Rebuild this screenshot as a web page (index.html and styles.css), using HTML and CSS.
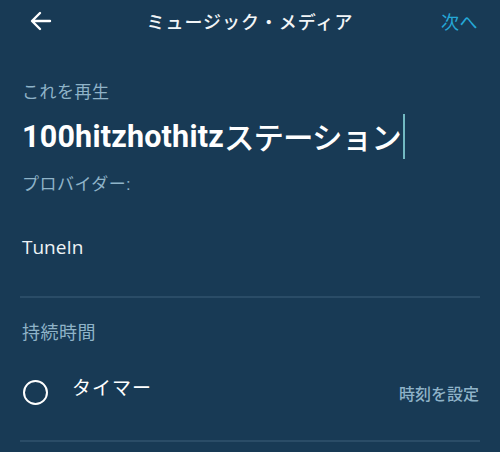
FILE: index.html
```html
<!DOCTYPE html>
<html lang="ja">
<head>
<meta charset="utf-8">
<link rel="stylesheet" href="styles.css">
</head>
<body>
<div class="screen">
  <header class="topbar">
    <svg class="back" width="22" height="20" viewBox="0 0 22 20"><path d="M20 10H3M10 2L2 10l8 8" fill="none" stroke="#fff" stroke-width="2.4" stroke-linecap="round" stroke-linejoin="round"/></svg>
    <div class="title">ミュージック・メディア</div>
    <div class="next">次へ</div>
  </header>
  <section class="block">
    <div class="label">これを再生</div>
    <div class="field"><span class="lat">100hitzhothitz</span><span class="jp">ステーション</span><span class="caret"></span></div>
    <div class="label provider">プロバイダー:</div>
    <div class="value">TuneIn</div>
  </section>
  <div class="divider"></div>
  <section class="block">
    <div class="label dur">持続時間</div>
    <div class="row">
      <span class="radio"></span>
      <span class="rowtext">タイマー</span>
      <span class="action">時刻を設定</span>
    </div>
  </section>
  <div class="divider last"></div>
</div>
</body>
</html>
```
FILE: styles.css
```css
html, body {
  margin: 0;
  padding: 0;
  background: #183a55;
}
.screen {
  width: 500px;
  height: 452px;
  overflow: hidden;
  background: #183a55;
  font-family: Roboto, "Noto Sans CJK JP", sans-serif;
  color: #fff;
}
.topbar {
  height: 42px;
  display: flex;
  align-items: center;
  padding: 0 22px 0 30px;
  position: relative;
}
.back { display: block; }
.title {
  position: absolute;
  left: 0;
  right: 0;
  text-align: center;
  font-size: 18px;
  font-weight: 500;
  letter-spacing: 1px;
  color: #f2f5f7;
  pointer-events: none;
}
.next {
  margin-left: auto;
  font-size: 18px;
  letter-spacing: 0.5px;
  color: #25a8d8;
}
.block {
  padding: 0 20px 0 22px;
}
.label {
  font-size: 17px;
  color: #8fb3c8;
  letter-spacing: 0.5px;
  line-height: 24px;
}
.block:first-of-type .label:first-child {
  margin-top: 38px;
}
.field {
  margin-top: 9px;
  height: 46px;
  display: flex;
  align-items: center;
  font-size: 30.5px;
}
.lat {
  font-weight: 700;
  letter-spacing: 0.2px;
}
.jp {
  font-weight: 500;
  letter-spacing: -0.9px;
}
.caret {
  width: 2px;
  height: 45px;
  background: #72b9c2;
  margin-left: 2px;
}
.provider { margin-top: 13px; }
.value {
  margin-top: 38px;
  font-family: "Open Sans", Roboto, sans-serif;
  font-size: 19px;
  line-height: 26px;
  color: #eef3f6;
}
.divider {
  margin: 36px 20px 0 20px;
  height: 2px;
  background: #2a4c67;
}
.dur {
  margin-top: 23px;
  font-size: 18px;
}
.row {
  margin-top: 30px;
  display: flex;
  align-items: center;
  height: 30px;
}
.radio {
  width: 21px;
  height: 21px;
  border: 2.8px solid #fff;
  border-radius: 50%;
  margin-top: 4px;
  margin-left: 1px;
}
.rowtext {
  margin-left: 24px;
  font-size: 19px;
  letter-spacing: 1px;
  margin-top: -8px;
}
.action {
  margin-left: auto;
  font-size: 16px;
  font-weight: 500;
  color: #8fb3c8;
  margin-top: 6px;
  margin-right: 1px;
}
.divider.last { margin-top: 35px; }
```
